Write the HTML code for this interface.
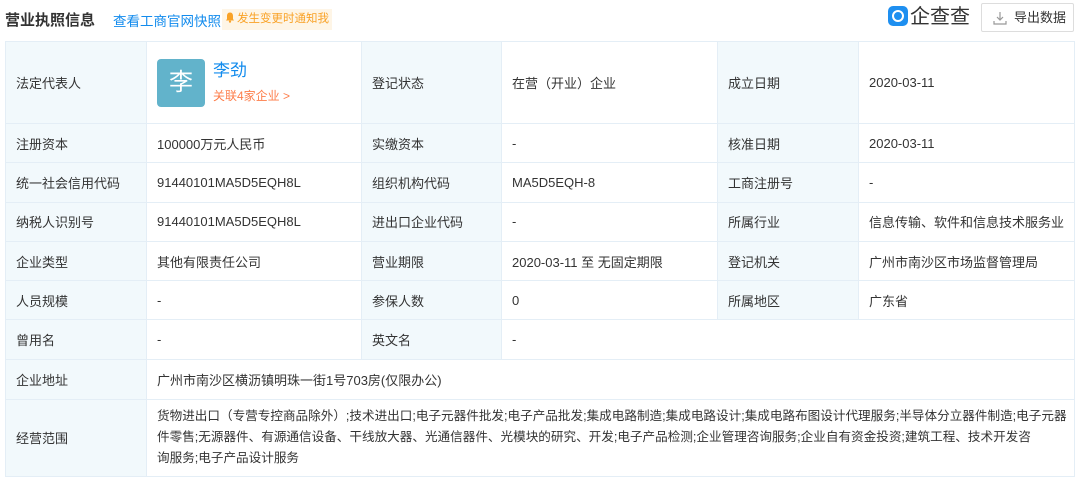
<!DOCTYPE html>
<html><head><meta charset="utf-8"><style>
*{margin:0;padding:0;box-sizing:border-box}
body{width:1080px;height:483px;background:#fff;font-family:"Liberation Sans","Noto Sans CJK SC",sans-serif;color:#333;font-size:13px;position:relative;overflow:hidden}
.title{position:absolute;left:5px;top:9px;font-size:15px;font-weight:bold;color:#333}
.link{position:absolute;left:113px;top:10px;font-size:13.5px;color:#128bed;white-space:nowrap}
.notify{position:absolute;left:222px;top:9px;height:21px;width:110px;background:#fef5e6;color:#f9a227;font-size:11.5px;line-height:21px;padding-left:3px;white-space:nowrap;overflow:hidden}
.notify svg{vertical-align:-1px;margin-right:2px}
.logo{position:absolute;left:888px;top:6px;font-size:20px;color:#333;line-height:22px}
.logo i{display:inline-block;width:20px;height:20px;background:#1e8ff0;border-radius:5px;vertical-align:-3px;margin-right:2px;position:relative}
.logo i:after{content:"";position:absolute;left:4px;top:4px;width:8px;height:8px;border:2px solid #fff;border-radius:50%}
.btn{position:absolute;left:981px;top:3px;width:93px;height:29px;border:1px solid #ddd;border-radius:2px;font-size:13px;line-height:27px;padding-left:32px;color:#333}
.btn svg{position:absolute;left:11px;top:7px}
table{position:absolute;left:5px;top:41px;border-collapse:collapse;table-layout:fixed;width:1069px}
td{border:1px solid #e4eef6;padding:0 0 0 10px;height:39.3px;vertical-align:middle;white-space:nowrap}
td.l{background:#f2f9fc}
.av{display:inline-block;width:48px;height:48px;background:#62b3cb;border-radius:4px;color:#fff;font-size:24px;text-align:center;line-height:48px;vertical-align:middle}
.nm{display:inline-block;vertical-align:middle;margin-left:8px}
.nm b{display:block;font-weight:normal;color:#128bed;font-size:17px;line-height:22px}
.nm span{display:block;color:#fd7d4a;font-size:12px;line-height:20px;margin-top:4px}
.sc{line-height:21px;padding-top:4px;padding-bottom:4px;font-size:12.6px}
</style></head><body>
<div class="title">营业执照信息</div>
<div class="link">查看工商官网快照</div>
<div class="notify"><svg width="10" height="11" viewBox="0 0 10 11"><path d="M5 0.5C2.8 0.5 2 2.2 2 4v3L1 8.5h8L8 7V4C8 2.2 7.2 0.5 5 0.5z" fill="#f9a227"/><circle cx="5" cy="9.6" r="1.1" fill="#f9a227"/></svg>发生变更时通知我</div>
<div class="logo"><i></i>企查查</div>
<div class="btn"><svg width="14" height="14" viewBox="0 0 14 14" fill="none" stroke="#999" stroke-width="1.2"><path d="M7 1v8M4 6l3 3 3-3M1 10v3h12v-3"/></svg>导出数据</div>
<table>
<colgroup><col style="width:141px"><col style="width:215px"><col style="width:140px"><col style="width:216px"><col style="width:141px"><col style="width:216px"></colgroup>
<tr><td class="l" style="height:82px">法定代表人</td><td><span class="av">李</span><span class="nm"><b>李劲</b><span>关联4家企业 &gt;</span></span></td><td class="l">登记状态</td><td>在营（开业）企业</td><td class="l">成立日期</td><td>2020-03-11</td></tr>
<tr><td class="l">注册资本</td><td>100000万元人民币</td><td class="l">实缴资本</td><td>-</td><td class="l">核准日期</td><td>2020-03-11</td></tr>
<tr><td class="l">统一社会信用代码</td><td>91440101MA5D5EQH8L</td><td class="l">组织机构代码</td><td>MA5D5EQH-8</td><td class="l">工商注册号</td><td>-</td></tr>
<tr><td class="l">纳税人识别号</td><td>91440101MA5D5EQH8L</td><td class="l">进出口企业代码</td><td>-</td><td class="l">所属行业</td><td>信息传输、软件和信息技术服务业</td></tr>
<tr><td class="l">企业类型</td><td>其他有限责任公司</td><td class="l">营业期限</td><td>2020-03-11 至 无固定期限</td><td class="l">登记机关</td><td>广州市南沙区市场监督管理局</td></tr>
<tr><td class="l">人员规模</td><td>-</td><td class="l">参保人数</td><td>0</td><td class="l">所属地区</td><td>广东省</td></tr>
<tr><td class="l">曾用名</td><td>-</td><td class="l">英文名</td><td colspan="3">-</td></tr>
<tr><td class="l" style="height:40px">企业地址</td><td colspan="5">广州市南沙区横沥镇明珠一街1号703房(仅限办公)</td></tr>
<tr><td class="l" style="height:77px">经营范围</td><td colspan="5" class="sc">货物进出口（专营专控商品除外）;技术进出口;电子元器件批发;电子产品批发;集成电路制造;集成电路设计;集成电路布图设计代理服务;半导体分立器件制造;电子元器<br>件零售;无源器件、有源通信设备、干线放大器、光通信器件、光模块的研究、开发;电子产品检测;企业管理咨询服务;企业自有资金投资;建筑工程、技术开发咨<br>询服务;电子产品设计服务</td></tr>
</table>
</body></html>
